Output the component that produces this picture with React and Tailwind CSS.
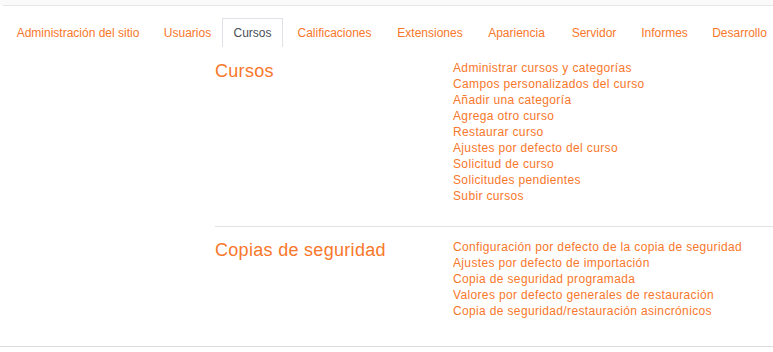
import React from 'react';

const tabs = [
    { label: 'Administración del sitio', w: 'w-[150px]' },
    { label: 'Usuarios', w: 'w-[69px]' },
    { label: 'Cursos', w: 'w-[61px]', active: true },
    { label: 'Calificaciones', w: 'w-[103px]' },
    { label: 'Extensiones', w: 'w-[88px]' },
    { label: 'Apariencia', w: 'w-[85px]' },
    { label: 'Servidor', w: 'w-[70px]' },
    { label: 'Informes', w: 'w-[71px]' },
    { label: 'Desarrollo', w: 'w-[79px]' },
];

const sections = [
    {
        title: 'Cursos',
        pad: 'pt-[13px] pb-[22px]',
        links: [
            'Administrar cursos y categorías',
            'Campos personalizados del curso',
            'Añadir una categoría',
            'Agrega otro curso',
            'Restaurar curso',
            'Ajustes por defecto del curso',
            'Solicitud de curso',
            'Solicitudes pendientes',
            'Subir cursos',
        ],
    },
    {
        title: 'Copias de seguridad',
        pad: 'pt-[12px] pb-[27px] border-t border-[#e3e3e3]',
        links: [
            'Configuración por defecto de la copia de seguridad',
            'Ajustes por defecto de importación',
            'Copia de seguridad programada',
            'Valores por defecto generales de restauración',
            'Copia de seguridad/restauración asincrónicos',
        ],
    },
];

const App = () => {
    return (
        <div className="w-[773px] h-[352px] overflow-hidden bg-white font-['Liberation_Sans',Arial,sans-serif]">
            <div className="h-[5px] bg-[#fafafa]" />
            <div className="ml-[3px] border-t border-[#e6e6e6]" />

            {/* tabs */}
            <nav className="flex pl-[3px] mt-[12px] whitespace-nowrap">
                {tabs.map(tab => (
                    <div
                        key={tab.label}
                        className={`${tab.w} shrink-0 h-[29px] flex items-center justify-center text-[12px] ${
                            tab.active
                                ? 'border border-b-0 border-[#dee2e6] text-[#495057]'
                                : 'text-[#f9772a]'
                        }`}
                    >
                        {tab.label}
                    </div>
                ))}
            </nav>

            <div className="ml-[215px]">
                {sections.map(section => (
                    <div key={section.title} className={`flex ${section.pad}`}>
                        <h2 className="w-[238px] shrink-0 text-[18px] leading-[22px] tracking-[0.3px] text-[#f9772a]">
                            {section.title}
                        </h2>
                        <ul className="text-[12px] leading-[16px] tracking-[0.35px] text-[#f9772a]">
                            {section.links.map(link => (
                                <li key={link}>{link}</li>
                            ))}
                        </ul>
                    </div>
                ))}
            </div>
            <div className="border-t border-[#dedede]" />
        </div>
    );
};

export default App;
